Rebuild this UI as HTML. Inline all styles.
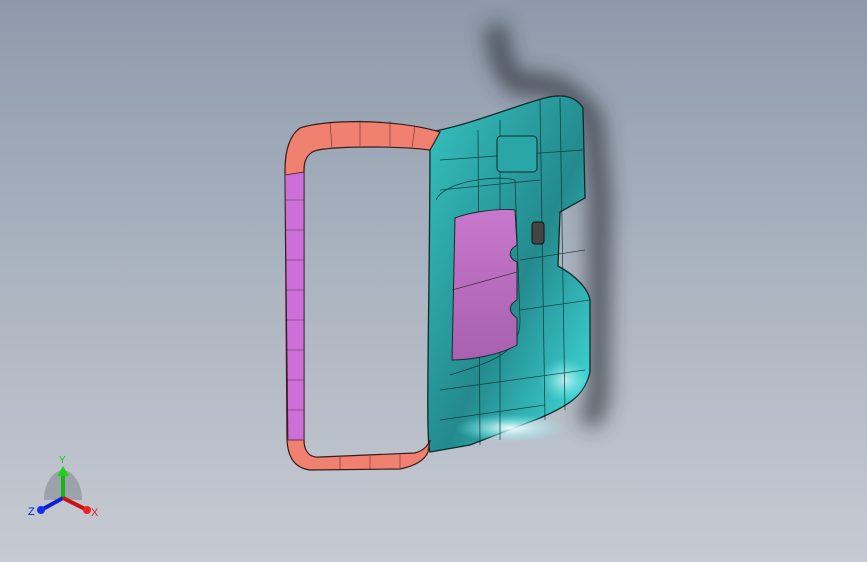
<!DOCTYPE html>
<html><head><style>
html,body{margin:0;padding:0;}
body{width:867px;height:562px;overflow:hidden;background:linear-gradient(#8e9aab 0%,#a9b2bf 45%,#c6cad2 100%);font-family:"Liberation Sans",sans-serif;}
svg{position:absolute;left:0;top:0}
</style></head><body>
<svg width="867" height="562" viewBox="0 0 867 562">
<defs>
<filter id="bl" x="-50%" y="-50%" width="200%" height="200%"><feGaussianBlur stdDeviation="10"/></filter>
<linearGradient id="tl" x1="0" y1="0" x2="1" y2="1"><stop offset="0" stop-color="#36c2c0"/><stop offset="0.55" stop-color="#238a8d"/><stop offset="1" stop-color="#44e4e4"/></linearGradient>
<linearGradient id="pu" x1="0" y1="0" x2="0" y2="1"><stop offset="0" stop-color="#c878cc"/><stop offset="1" stop-color="#a860b0"/></linearGradient>
<radialGradient id="wh" cx="0.5" cy="0.5" r="0.5"><stop offset="0" stop-color="#fff"/><stop offset="1" stop-color="#7ff" stop-opacity="0"/></radialGradient>
</defs>
<!-- shadow -->
<path d="M494 25 C500 45 500 75 520 85 C555 80 575 95 592 120 L600 200 L598 400 L588 425" fill="none" stroke="#2a2e36" stroke-width="22" filter="url(#bl)" opacity="0.7"/>
<!-- teal panel -->
<path d="M430 132 C470 125 520 104 545 98 C560 94 575 95 583 108 L585 198 L560 212 L558 266 C575 275 590 290 590 302 L590 372 C585 395 570 405 540 418 L470 445 L430 452 C425 440 430 300 430 132 Z" fill="url(#tl)" stroke="#0d2b2c" stroke-width="1.3"/>
<ellipse cx="510" cy="428" rx="55" ry="14" fill="url(#wh)" opacity="0.95"/>
<ellipse cx="565" cy="380" rx="25" ry="22" fill="url(#wh)" opacity="0.7"/>
<g stroke="#0d2b2c" stroke-width="0.8" fill="none" opacity="0.8">
<path d="M440 160 L583 150 M440 190 L540 180 M520 260 L585 250 M520 310 L590 300 M440 390 L585 370 M440 420 L545 405"/>
<path d="M478 130 L480 445 M500 120 L500 440 M540 100 L545 420 M560 98 L565 410"/>
<path d="M436 200 C445 180 500 175 515 180 L520 320 C520 350 500 360 450 375"/>
</g>
<rect x="497" y="136" width="40" height="36" rx="4" fill="#2aa6a6" stroke="#0d2b2c"/>
<rect x="532" y="222" width="12" height="22" rx="3" fill="#444" stroke="#111"/>
<!-- purple window -->
<path d="M455 218 C470 212 500 208 515 210 L517 245 C508 250 508 258 517 262 L517 300 C508 305 508 312 517 318 L517 345 C500 355 470 360 452 360 Z" fill="url(#pu)" stroke="#1a2a2a"/>
<path d="M452 290 L517 272" stroke="#333" stroke-width="0.7"/>
<!-- frame -->
<path d="M300 128 C330 118 400 120 440 132 L430 150 C400 146 340 146 318 150 C308 152 304 160 304 170 L304 440 C304 452 310 458 320 457 L415 453 C425 450 428 445 430 440 L428 452 C425 460 415 466 400 469 L310 470 C295 468 288 458 287 440 L285 170 C285 150 290 135 300 128 Z" fill="#f08070" stroke="#3a1a1a" stroke-width="1.2"/>
<path d="M285 175 L304 172 L304 440 L288 440 Z" fill="#cc70d8" stroke="#3a1a2a" stroke-width="0.8"/>
<g stroke="#2a1018" stroke-width="0.6" opacity="0.7">
<path d="M286 200 L304 200 M286 230 L304 230 M286 260 L304 260 M286 290 L304 290 M286 320 L304 320 M286 350 L304 350 M286 380 L304 380 M286 410 L304 410"/>
<path d="M330 123 L332 147 M360 120 L360 146 M390 121 L390 146 M415 126 L412 147 M340 457 L340 470 M370 456 L370 470 M400 455 L400 468"/>
</g>
<!-- triad -->
<path d="M44 500 C44 480 56 470 63 470 C70 470 82 480 82 500 Z" fill="#7a7f88" opacity="0.5"/>
<line x1="63" y1="498" x2="63" y2="474" stroke="#14b614" stroke-width="4"/>
<polygon points="57,476 63,466 69,476" fill="#20d020"/>
<line x1="63" y1="498" x2="43" y2="509" stroke="#1020d0" stroke-width="4"/>
<circle cx="41" cy="510" r="4" fill="#1030f0"/>
<line x1="63" y1="498" x2="85" y2="509" stroke="#d01010" stroke-width="4"/>
<circle cx="87" cy="510" r="4" fill="#f02020"/>
<text x="59" y="463" font-size="10" fill="#20c020">Y</text>
<text x="28" y="515" font-size="11" fill="#1020e0">Z</text>
<text x="91" y="516" font-size="11" fill="#e02020">X</text>
</svg>
</body></html>
